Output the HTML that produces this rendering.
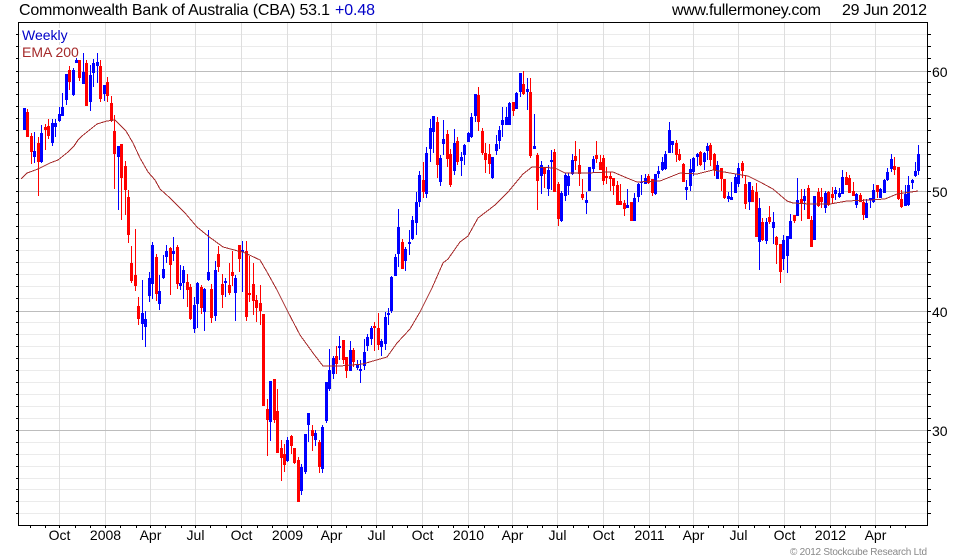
<!DOCTYPE html>
<html>
<head>
<meta charset="utf-8">
<title>CBA</title>
<style>
html,body{margin:0;padding:0;background:#fff;width:980px;height:560px;overflow:hidden}
svg{display:block}
text{font-family:"Liberation Sans",Arial,sans-serif;font-size:14px;fill:#000}
</style>
</head>
<body>
<svg xmlns="http://www.w3.org/2000/svg" width="980" height="560" viewBox="0 0 980 560">
<g shape-rendering="crispEdges" fill="none">
<path stroke="#ebebeb" d="M18 34.5H927M18 46.5H927M18 58.5H927M18 82.5H927M18 94.5H927M18 106.5H927M18 118.5H927M18 130.5H927M18 142.5H927M18 154.5H927M18 166.5H927M18 178.5H927M18 202.5H927M18 214.5H927M18 226.5H927M18 238.5H927M18 250.5H927M18 262.5H927M18 274.5H927M18 286.5H927M18 298.5H927M18 322.5H927M18 334.5H927M18 346.5H927M18 358.5H927M18 370.5H927M18 382.5H927M18 394.5H927M18 406.5H927M18 418.5H927M18 442.5H927M18 454.5H927M18 466.5H927M18 478.5H927M18 489.5H927M18 501.5H927M18 513.5H927"/>
<path stroke="#dedede" d="M59.5 22V525M105.5 22V525M150.5 22V525M195.5 22V525M241.5 22V525M287.5 22V525M331.5 22V525M376.5 22V525M422.5 22V525M468.5 22V525M512.5 22V525M557.5 22V525M603.5 22V525M649.5 22V525M693.5 22V525M738.5 22V525M784.5 22V525M830.5 22V525M875.5 22V525"/>
<path stroke="#bdbdbd" d="M18 71.5H927M18 191.5H927M18 311.5H927M18 430.5H927"/>
</g>
<rect x="21" y="28" width="48" height="14" fill="#fff"/>
<rect x="21" y="45" width="59" height="14" fill="#fff"/>
<g shape-rendering="crispEdges" fill="none">
<path stroke="#0000ff" stroke-width="1" d="M24.5 108V130M34.5 132V163M41.5 125V163M52.5 119V146M55.5 119V137M59.5 107V122M62.5 93V116M66.5 74V105M73.5 68V96M76.5 58V63M83.5 53V84M90.5 65V111M93.5 59V87M97.5 53V83M104.5 85V101M118.5 146V210M142.5 280V340M145.5 311V347M149.5 272V302M152.5 242V299M159.5 275V310M163.5 255V279M166.5 245V263M173.5 237V261M180.5 265V290M183.5 266V299M194.5 297V333M197.5 282V328M204.5 288V331M208.5 230V281M215.5 261V321M225.5 278V297M235.5 275V321M242.5 241V292M270.5 381V441M287.5 437V462M301.5 464V495M305.5 434V474M308.5 413V442M315.5 430V446M322.5 425V473M326.5 382V423M329.5 349V391M333.5 356V379M339.5 336V360M350.5 341V371M357.5 360V370M360.5 360V383M364.5 339V370M367.5 334V351M371.5 326V345M381.5 339V356M385.5 312V350M388.5 308V325M391.5 276V313M395.5 254V276M398.5 209V267M405.5 247V271M409.5 230V255M412.5 216V240M416.5 192V235M419.5 171V207M426.5 147V198M430.5 119V162M433.5 116V153M440.5 155V186M443.5 120V155M454.5 129V175M461.5 152V176M464.5 144V165M468.5 132V142M471.5 113V138M475.5 94V122M492.5 157V179M496.5 135V155M499.5 126V149M502.5 107V137M506.5 107V125M509.5 102V125M516.5 92V109M520.5 73V97M527.5 78V110M534.5 114V149M541.5 161V194M548.5 165V196M551.5 150V190M561.5 191V222M565.5 173V201M568.5 173V195M572.5 154V175M586.5 192V214M589.5 167V191M593.5 156V173M627.5 189V208M634.5 193V221M638.5 183V202M641.5 175V195M645.5 174V184M655.5 174V195M658.5 166V178M662.5 157V171M665.5 151V170M669.5 122V153M672.5 141V153M686.5 180V200M690.5 159V191M693.5 157V176M697.5 153V166M704.5 152V170M707.5 143V160M717.5 161V179M728.5 192V202M731.5 182V200M735.5 174V193M738.5 163V187M749.5 182V210M759.5 198V270M766.5 218V244M773.5 212V244M783.5 235V270M787.5 236V273M790.5 214V239M797.5 178V216M804.5 189V210M814.5 196V240M825.5 191V213M835.5 187V200M839.5 188V198M842.5 170V194M856.5 193V208M866.5 199V218M870.5 198V208M873.5 184V203M880.5 188V198M884.5 179V193M887.5 168V181M891.5 154V172M905.5 185V206M908.5 176V206M912.5 179V189M915.5 162V177M918.5 145V175"/>
<path stroke="#0000ff" stroke-width="3" d="M24.5 108V130M34.5 151V157M41.5 133V162M52.5 123V143M55.5 123V127M59.5 114V121M62.5 107V116M66.5 74V100M73.5 70V95M76.5 60V63M83.5 72V84M90.5 75V102M93.5 63V73M97.5 62V66M104.5 85V94M118.5 146V157M142.5 313V324M145.5 319V327M149.5 278V296M152.5 245V284M159.5 291V304M163.5 269V278M166.5 251V257M173.5 251V254M180.5 283V286M183.5 270V283M194.5 305V329M197.5 283V304M204.5 289V312M208.5 272V280M215.5 270V316M225.5 281V283M235.5 278V293M242.5 250V252M270.5 381V422M287.5 440V461M301.5 467V491M305.5 434V472M308.5 413V425M315.5 433V440M322.5 427V469M326.5 382V421M329.5 370V389M333.5 358V374M339.5 346V348M350.5 350V371M357.5 365V368M360.5 369V371M364.5 352V366M367.5 337V346M371.5 328V339M381.5 341V347M385.5 317V344M388.5 313V315M391.5 277V311M395.5 257V276M398.5 227V254M405.5 249V261M409.5 242V244M412.5 220V239M416.5 202V223M419.5 175V202M426.5 153V194M430.5 128V149M433.5 116V132M440.5 158V182M443.5 139V144M454.5 143V171M461.5 157V161M464.5 145V155M468.5 133V142M471.5 117V137M475.5 94V116M492.5 157V178M496.5 144V151M499.5 130V141M502.5 120V125M506.5 117V125M509.5 103V125M516.5 93V109M520.5 73V92M527.5 89V92M534.5 146V149M541.5 165V176M548.5 170V189M551.5 160V162M561.5 193V221M565.5 175V196M568.5 176V186M572.5 160V174M586.5 200V203M589.5 167V191M593.5 159V169M627.5 205V208M634.5 198V221M638.5 184V197M641.5 182V183M645.5 178V184M655.5 174V194M658.5 171V174M662.5 162V170M665.5 154V169M669.5 130V153M672.5 141V145M686.5 187V190M690.5 169V186M693.5 158V172M697.5 154V157M704.5 153V162M707.5 146V151M717.5 165V179M728.5 196V199M731.5 197V200M735.5 177V193M738.5 168V184M749.5 182V202M759.5 208V242M766.5 222V241M773.5 222V228M783.5 240V259M787.5 236V256M790.5 221V239M797.5 200V216M804.5 196V201M814.5 196V240M825.5 193V208M835.5 190V194M839.5 193V197M842.5 177V194M856.5 194V205M866.5 203V218M870.5 198V200M873.5 190V202M880.5 189V198M884.5 180V193M887.5 172V180M891.5 159V169M905.5 194V206M908.5 185V205M912.5 180V183M915.5 171V176M918.5 154V171"/>
<path stroke="#ff0000" stroke-width="1" d="M27.5 109V137M31.5 133V164M38.5 137V196M45.5 124V150M48.5 119V139M69.5 66V90M79.5 60V81M86.5 60V106M100.5 60V102M107.5 77V102M111.5 96V122M114.5 115V189M121.5 144V220M125.5 161V215M128.5 190V243M131.5 246V283M135.5 229V291M138.5 297V325M156.5 254V301M170.5 247V295M177.5 245V289M187.5 274V307M190.5 284V320M201.5 285V314M211.5 284V323M218.5 246V272M222.5 274V308M229.5 263V295M232.5 251V286M239.5 245V272M246.5 241V321M249.5 256V302M253.5 263V315M256.5 295V322M260.5 285V325M263.5 314V406M267.5 399V456M274.5 379V423M277.5 389V453M281.5 440V481M284.5 444V472M291.5 435V454M294.5 448V464M298.5 457V502M312.5 425V451M319.5 440V473M336.5 346V374M343.5 340V364M346.5 357V378M353.5 348V367M374.5 322V351M378.5 313V350M402.5 239V269M423.5 162V198M437.5 117V178M447.5 130V167M450.5 149V187M457.5 137V165M478.5 87V131M482.5 128V155M485.5 143V173M489.5 144V174M513.5 102V116M523.5 71V95M530.5 78V158M537.5 153V210M544.5 167V188M554.5 149V192M558.5 182V226M575.5 141V170M579.5 149V186M582.5 179V200M596.5 141V163M600.5 155V170M603.5 155V185M606.5 167V184M610.5 172V191M613.5 178V195M617.5 181V205M620.5 184V205M624.5 200V216M631.5 202V221M648.5 174V184M652.5 179V196M676.5 140V162M679.5 149V161M683.5 163V182M700.5 151V166M710.5 143V166M714.5 153V176M721.5 168V191M724.5 179V199M742.5 161V178M745.5 176V209M752.5 186V202M756.5 183V237M762.5 218V241M769.5 206V224M776.5 236V264M780.5 244V283M794.5 215V223M801.5 189V221M808.5 185V219M811.5 216V247M818.5 188V207M821.5 188V208M828.5 191V206M832.5 187V203M846.5 172V185M849.5 175V193M853.5 182V196M860.5 193V202M863.5 199V220M877.5 185V198M894.5 157V175M898.5 167V200M901.5 190V208"/>
<path stroke="#ff0000" stroke-width="3" d="M27.5 112V137M31.5 136V152M38.5 143V162M45.5 127V130M48.5 126V136M69.5 70V82M79.5 60V78M86.5 63V106M100.5 66V99M107.5 82V96M111.5 103V121M114.5 131V154M121.5 144V178M125.5 166V190M128.5 197V235M131.5 263V281M135.5 275V286M138.5 306V319M156.5 257V294M170.5 248V265M177.5 247V284M187.5 282V290M190.5 287V319M201.5 287V308M211.5 289V318M218.5 254V267M222.5 284V295M229.5 285V293M232.5 272V276M239.5 245V259M246.5 251V317M249.5 293V295M253.5 284V301M256.5 300V308M260.5 303V311M263.5 314V406M267.5 409V420M274.5 379V420M277.5 411V453M281.5 448V458M284.5 454V465M291.5 436V446M294.5 448V463M298.5 460V502M312.5 430V436M319.5 442V467M336.5 356V364M343.5 340V360M346.5 357V371M353.5 350V362M374.5 326V328M378.5 328V345M402.5 242V269M423.5 180V192M437.5 122V165M447.5 134V159M450.5 154V185M457.5 141V162M478.5 95V122M482.5 131V153M485.5 153V160M489.5 154V164M513.5 102V111M523.5 84V94M530.5 92V156M537.5 155V181M544.5 167V174M554.5 152V192M558.5 184V219M575.5 156V161M579.5 165V174M582.5 194V198M596.5 155V159M600.5 162V170M603.5 158V181M606.5 176V178M610.5 176V179M613.5 178V186M617.5 185V205M620.5 201V205M624.5 203V209M631.5 202V221M648.5 176V183M652.5 179V193M676.5 143V155M679.5 154V160M683.5 164V182M700.5 152V165M710.5 145V160M714.5 154V170M721.5 168V179M724.5 179V198M742.5 163V171M745.5 184V204M752.5 190V202M756.5 192V237M762.5 222V240M769.5 217V222M776.5 237V245M780.5 244V272M794.5 215V221M801.5 199V203M808.5 188V219M811.5 220V247M818.5 192V206M821.5 197V202M828.5 192V205M832.5 194V198M846.5 177V185M849.5 178V193M853.5 191V196M860.5 195V202M863.5 202V215M877.5 185V192M894.5 166V170M898.5 167V199M901.5 199V207"/>
</g>
<path fill="none" stroke="#a52a2a" stroke-width="1" shape-rendering="crispEdges" d="M21 179L27 173L30 172L38 169L50 163L58 160L68 152L74 146L78 140L82 136L87 132L97 124L107 121L115 120L123 128L126 131L133 143L140 158L148 172L155 180L160 189L170 198L185 213L197 227L208 236L223 247L238 251L243 252L260 260L267 272L277 290L288 312L300 335L313 353L323 366L340 366L363 364L373 361L387 357L397 343L410 329L420 312L432 288L443 263L448 259L460 242L468 236L478 218L495 205L508 192L523 174L532 167L555 168L565 173L583 173L588 173L607 172L613 172L627 178L637 182L660 181L680 173L697 174L713 170L730 173L748 176L760 182L773 189L787 201L793 203L810 204L830 204L847 201L870 200L885 199L897 194L918 191"/>
<g shape-rendering="crispEdges" fill="none" stroke="#000">
<rect x="18.5" y="22.5" width="909" height="503"/>
<path d="M16 34.5H18M16 46.5H18M16 58.5H18M16 71.5H18M16 82.5H18M16 94.5H18M16 106.5H18M16 118.5H18M16 130.5H18M16 142.5H18M16 154.5H18M16 166.5H18M16 178.5H18M16 191.5H18M16 202.5H18M16 214.5H18M16 226.5H18M16 238.5H18M16 250.5H18M16 262.5H18M16 274.5H18M16 286.5H18M16 298.5H18M16 311.5H18M16 322.5H18M16 334.5H18M16 346.5H18M16 358.5H18M16 370.5H18M16 382.5H18M16 394.5H18M16 406.5H18M16 418.5H18M16 430.5H18M16 442.5H18M16 454.5H18M16 466.5H18M16 478.5H18M16 489.5H18M16 501.5H18M16 513.5H18"/>
<path d="M928 34.5H931M928 46.5H931M928 58.5H931M928 71.5H931M928 82.5H931M928 94.5H931M928 106.5H931M928 118.5H931M928 130.5H931M928 142.5H931M928 154.5H931M928 166.5H931M928 178.5H931M928 191.5H931M928 202.5H931M928 214.5H931M928 226.5H931M928 238.5H931M928 250.5H931M928 262.5H931M928 274.5H931M928 286.5H931M928 298.5H931M928 311.5H931M928 322.5H931M928 334.5H931M928 346.5H931M928 358.5H931M928 370.5H931M928 382.5H931M928 394.5H931M928 406.5H931M928 418.5H931M928 430.5H931M928 442.5H931M928 454.5H931M928 466.5H931M928 478.5H931M928 489.5H931M928 501.5H931M928 513.5H931"/>
<path d="M30.5 526V528M45.5 526V528M59.5 526V528M75.5 526V528M90.5 526V528M105.5 526V528M120.5 526V528M136.5 526V528M150.5 526V528M165.5 526V528M181.5 526V528M195.5 526V528M210.5 526V528M226.5 526V528M241.5 526V528M257.5 526V528M272.5 526V528M287.5 526V528M303.5 526V528M317.5 526V528M331.5 526V528M346.5 526V528M361.5 526V528M376.5 526V528M392.5 526V528M407.5 526V528M422.5 526V528M438.5 526V528M453.5 526V528M468.5 526V528M484.5 526V528M498.5 526V528M512.5 526V528M527.5 526V528M542.5 526V528M557.5 526V528M573.5 526V528M588.5 526V528M603.5 526V528M619.5 526V528M634.5 526V528M649.5 526V528M665.5 526V528M679.5 526V528M693.5 526V528M708.5 526V528M723.5 526V528M738.5 526V528M754.5 526V528M769.5 526V528M784.5 526V528M800.5 526V528M815.5 526V528M830.5 526V528M845.5 526V528M860.5 526V528M875.5 526V528M890.5 526V528M905.5 526V528"/>
</g>
<text x="19" y="15" style="font-size:16px" textLength="311">Commonwealth Bank of Australia (CBA) 53.1</text>
<text x="335" y="15" style="font-size:16px;fill:#0000c8" textLength="40">+0.48</text>
<text x="672" y="15" style="font-size:16px" textLength="149">www.fullermoney.com</text>
<text x="842" y="15" style="font-size:16px" textLength="85">29 Jun 2012</text>
<text x="22" y="40" style="fill:#0000c8">Weekly</text>
<text x="22" y="57" style="fill:#a52a2a">EMA 200</text>
<text x="932" y="77">60</text>
<text x="932" y="197">50</text>
<text x="932" y="317">40</text>
<text x="932" y="436">30</text>
<text x="59.5" y="540" text-anchor="middle">Oct</text>
<text x="105.5" y="540" text-anchor="middle">2008</text>
<text x="150.5" y="540" text-anchor="middle">Apr</text>
<text x="195.5" y="540" text-anchor="middle">Jul</text>
<text x="241.5" y="540" text-anchor="middle">Oct</text>
<text x="287.5" y="540" text-anchor="middle">2009</text>
<text x="331.5" y="540" text-anchor="middle">Apr</text>
<text x="376.5" y="540" text-anchor="middle">Jul</text>
<text x="422.5" y="540" text-anchor="middle">Oct</text>
<text x="468.5" y="540" text-anchor="middle">2010</text>
<text x="512.5" y="540" text-anchor="middle">Apr</text>
<text x="557.5" y="540" text-anchor="middle">Jul</text>
<text x="603.5" y="540" text-anchor="middle">Oct</text>
<text x="649.5" y="540" text-anchor="middle">2011</text>
<text x="693.5" y="540" text-anchor="middle">Apr</text>
<text x="738.5" y="540" text-anchor="middle">Jul</text>
<text x="784.5" y="540" text-anchor="middle">Oct</text>
<text x="830.5" y="540" text-anchor="middle">2012</text>
<text x="875.5" y="540" text-anchor="middle">Apr</text>
<text x="790" y="555" style="font-size:10px;fill:#888" textLength="137">© 2012 Stockcube Research Ltd</text>
</svg>
</body>
</html>
